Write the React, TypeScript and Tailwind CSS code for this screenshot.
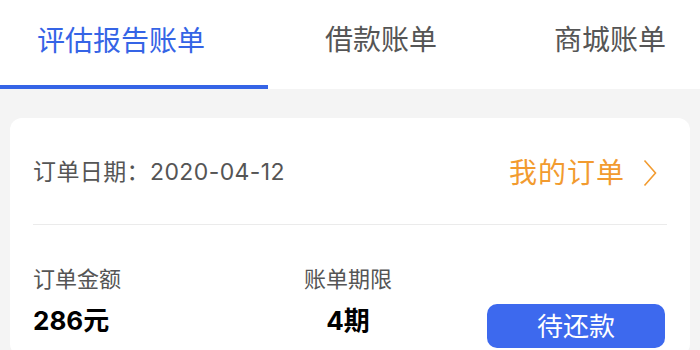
import React from "react";

const font = { fontFamily: 'Inter, "Noto Sans CJK SC", "Noto Sans", sans-serif' };

function Tabs() {
  return (
    <div className="flex h-[89px] bg-white">
      <div className="flex w-[268px] items-center border-b-4 border-[#3564e6] pl-[37px] pb-[4px] text-[28px] text-[#3564e6]">
        评估报告账单
      </div>
      <div className="flex items-center pl-[57px] pb-[9px] text-[28px] text-[#555]">借款账单</div>
      <div className="flex items-center pl-[117px] pb-[9px] text-[28px] text-[#555]">商城账单</div>
    </div>
  );
}

export default function App() {
  return (
    <div style={font} className="h-[350px] w-[700px] overflow-hidden bg-[#f4f4f4]">
      <Tabs />
      <div className="mx-[10px] mt-[29px] rounded-[12px] bg-white px-[23px]">
        <div className="flex h-[107px] items-center justify-between border-b border-[#ebebeb] pt-[3px]">
          <span className="text-[23px] tracking-[0.4px] text-[#555]">订单日期：2020-04-12</span>
          <span className="flex items-center gap-[18px] pr-[10px] text-[28px] text-[#f29b2f]">
            <span className="tracking-[1px]">我的订单</span>
            <svg width="14" height="28" viewBox="0 0 14 28" fill="none">
              <path d="M1.5 1.5 L12.5 14 L1.5 26.5" stroke="#f29b2f" strokeWidth="1.6" />
            </svg>
          </span>
        </div>
        <div className="flex pt-[38px] pb-[8px]">
          <div className="flex w-[269px] flex-col gap-[8px]">
            <span className="text-[22px] leading-[32px] text-[#555]">订单金额</span>
            <span className="text-[26px] font-bold leading-[36px] text-black">286元</span>
          </div>
          <div className="flex w-[92px] flex-col items-center gap-[8px]">
            <span className="text-[22px] leading-[32px] text-[#555]">账单期限</span>
            <span className="text-[26px] font-bold leading-[36px] text-black">4期</span>
          </div>
          <button className="ml-auto mr-[2px] mt-[41px] h-[44px] w-[178px] rounded-[10px] bg-[#3d69ee] text-[26px] text-white">
            待还款
          </button>
        </div>
      </div>
    </div>
  );
}
